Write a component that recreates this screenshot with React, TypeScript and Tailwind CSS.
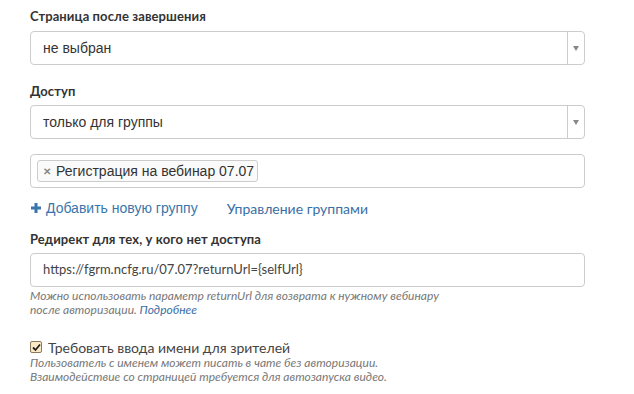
import React from "react";

const arial = { fontFamily: '"Liberation Sans", Arial, sans-serif' };

function Select({ text }: { text: string }) {
  return (
    <div className="flex h-[34px] w-[555px] items-stretch rounded-[4px] border border-[#cccccc] bg-white">
      <div className="flex flex-1 items-center pl-[12px] text-[14px] text-[#333]" style={arial}>
        {text}
      </div>
      <div className="flex w-[17px] items-center justify-center border-l border-[#cccccc]">
        <div className="h-0 w-0 border-x-[3px] border-t-[5px] border-x-transparent border-t-[#888]" />
      </div>
    </div>
  );
}

export default function App() {
  return (
    <div
      className="h-[394px] w-[634px] bg-white pl-[30px] pt-[7px] text-[#333]"
      style={{ fontFamily: 'Lato, "Open Sans", sans-serif' }}
    >
      <div className="text-[13px] font-bold leading-[18px] tracking-[0.1px] text-[#333]">Страница после завершения</div>
      <div className="mt-[6px]">
        <Select text="не выбран" />
      </div>

      <div className="mt-[17px] text-[13px] font-bold leading-[18px] tracking-[0.1px]">Доступ</div>
      <div className="mt-[5px]">
        <Select text="только для группы" />
      </div>

      <div className="mt-[15px] flex h-[34px] w-[555px] items-center rounded-[4px] border border-[#cccccc] bg-white pl-[6px]">
        <div
          className="flex h-[22px] items-center rounded-[3px] border border-[#cccccc] bg-[#fafafa] pl-[5px] pr-[3px] text-[14px] text-[#333]"
          style={arial}
        >
          <span className="mr-[5px] text-[10px] font-bold text-[#888]">✕</span>
          Регистрация на вебинар 07.07
        </div>
      </div>

      <div className="mt-[10px] flex h-[20px] items-center text-[14px]">
        <span className="flex items-center text-[#3a76ab]" style={arial}>
          <svg width="10" height="10" viewBox="0 0 10 10" className="ml-[1px] mr-[5px]">
            <rect x="3.5" y="0" width="3" height="10" fill="#3a76ab" />
            <rect x="0" y="3.5" width="10" height="3" fill="#3a76ab" />
          </svg>
          Добавить новую группу
        </span>
        <span className="ml-[29px] text-[#3a6ea5]">Управление группами</span>
      </div>

      <div className="mt-[12px] text-[13px] font-bold leading-[18px] tracking-[0.1px]">Редирект для тех, у кого нет доступа</div>
      <div className="mt-[5px] flex h-[34px] w-[555px] items-center rounded-[4px] border border-[#cccccc] bg-white pl-[12px] text-[13px] text-[#444]">
        https://fgrm.ncfg.ru/07.07?returnUrl={"{selfUrl}"}
      </div>
      <div className="mt-[2px] text-[12px] italic leading-[14px] text-[#777]">
        Можно использовать параметр returnUrl для возврата к нужному вебинару
        <br />
        после авторизации. <span className="text-[#3a6ea5]">Подробнее</span>
      </div>

      <div className="mt-[21px] flex h-[18px] items-center text-[14px] text-[#444]">
        <div className="mr-[6px] flex h-[12px] w-[12px] items-center justify-center rounded-[2px] border border-[#8a7a5a] bg-[#fbeac8]">
          <svg width="9" height="9" viewBox="0 0 9 9">
            <path d="M1 4.5 L3.5 7 L8 1.5" stroke="#222" strokeWidth="1.8" fill="none" />
          </svg>
        </div>
        Требовать ввода имени для зрителей
      </div>
      <div className="text-[12px] italic leading-[14px] text-[#777]">
        Пользователь с именем может писать в чате без авторизации.
        <br />
        Взаимодействие со страницей требуется для автозапуска видео.
      </div>
    </div>
  );
}
